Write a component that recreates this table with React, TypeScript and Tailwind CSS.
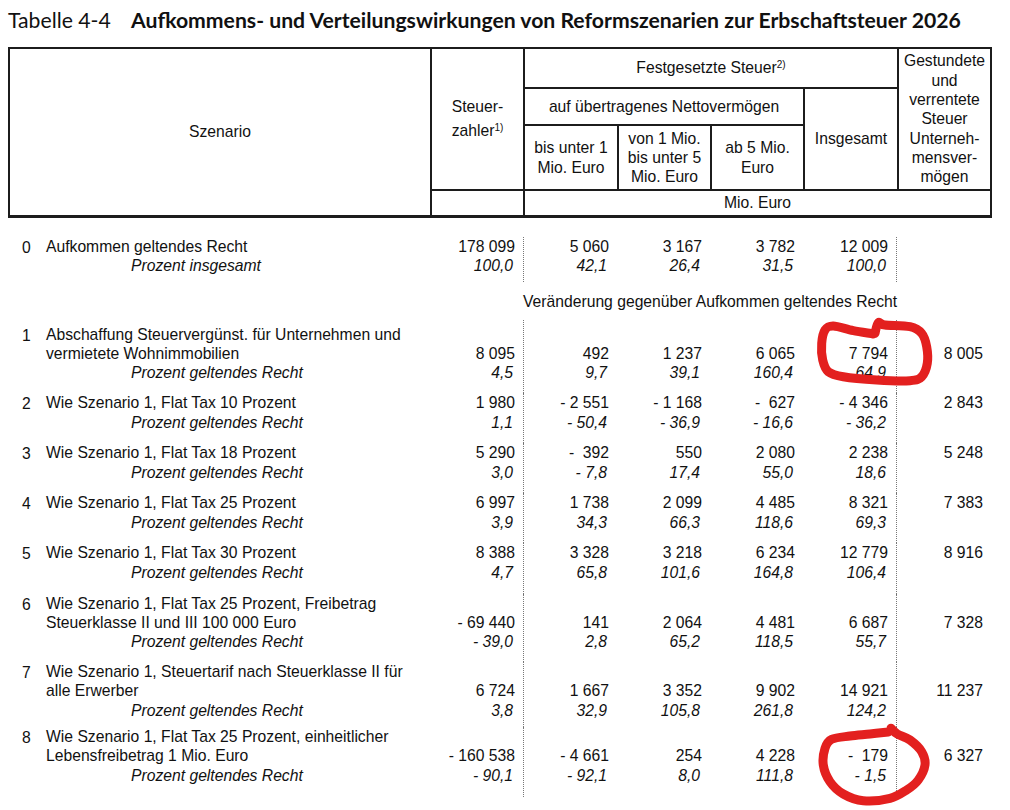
import React from 'react';

type Row = {
  idx: string;
  lines: string[];
  pctLabel: string;
  values: string[];
  pcts: string[];
  pad: string;
};

const rows: Row[] = [
  {
    idx: '1',
    lines: ['Abschaffung Steuervergünst. für Unternehmen und', 'vermietete Wohnimmobilien'],
    pctLabel: 'Prozent geltendes Recht',
    values: ['8 095', '492', '1 237', '6 065', '7 794', '8 005'],
    pcts: ['4,5', '9,7', '39,1', '160,4', '64,9'],
    pad: 'pt-[4.7px] pb-[11.1px]',
  },
  {
    idx: '2',
    lines: ['Wie Szenario 1, Flat Tax 10 Prozent'],
    pctLabel: 'Prozent geltendes Recht',
    values: ['1 980', '- 2 551', '- 1 168', '-  627', '- 4 346', '2 843'],
    pcts: ['1,1', '- 50,4', '- 36,9', '- 16,6', '- 36,2'],
    pad: 'pb-[11.6px]',
  },
  {
    idx: '3',
    lines: ['Wie Szenario 1, Flat Tax 18 Prozent'],
    pctLabel: 'Prozent geltendes Recht',
    values: ['5 290', '-  392', '550', '2 080', '2 238', '5 248'],
    pcts: ['3,0', '- 7,8', '17,4', '55,0', '18,6'],
    pad: 'pb-[11.6px]',
  },
  {
    idx: '4',
    lines: ['Wie Szenario 1, Flat Tax 25 Prozent'],
    pctLabel: 'Prozent geltendes Recht',
    values: ['6 997', '1 738', '2 099', '4 485', '8 321', '7 383'],
    pcts: ['3,9', '34,3', '66,3', '118,6', '69,3'],
    pad: 'pb-[11.6px]',
  },
  {
    idx: '5',
    lines: ['Wie Szenario 1, Flat Tax 30 Prozent'],
    pctLabel: 'Prozent geltendes Recht',
    values: ['8 388', '3 328', '3 218', '6 234', '12 779', '8 916'],
    pcts: ['4,7', '65,8', '101,6', '164,8', '106,4'],
    pad: 'pb-[11.9px]',
  },
  {
    idx: '6',
    lines: ['Wie Szenario 1, Flat Tax 25 Prozent, Freibetrag', 'Steuerklasse II und III 100 000 Euro'],
    pctLabel: 'Prozent geltendes Recht',
    values: ['- 69 440', '141', '2 064', '4 481', '6 687', '7 328'],
    pcts: ['- 39,0', '2,8', '65,2', '118,5', '55,7'],
    pad: 'pb-[10.8px]',
  },
  {
    idx: '7',
    lines: ['Wie Szenario 1, Steuertarif nach Steuerklasse II für', 'alle Erwerber'],
    pctLabel: 'Prozent geltendes Recht',
    values: ['6 724', '1 667', '3 352', '9 902', '14 921', '11 237'],
    pcts: ['3,8', '32,9', '105,8', '261,8', '124,2'],
    pad: 'pb-[7.4px]',
  },
  {
    idx: '8',
    lines: ['Wie Szenario 1, Flat Tax 25 Prozent, einheitlicher', 'Lebensfreibetrag 1 Mio. Euro'],
    pctLabel: 'Prozent geltendes Recht',
    values: ['- 160 538', '- 4 661', '254', '4 228', '-  179', '6 327'],
    pcts: ['- 90,1', '- 92,1', '8,0', '111,8', '- 1,5'],
    pad: 'pb-[12px]',
  },
];

const baseRow: Row = {
  idx: '0',
  lines: ['Aufkommen geltendes Recht'],
  pctLabel: 'Prozent insgesamt',
  values: ['178 099', '5 060', '3 167', '3 782', '12 009', ''],
  pcts: ['100,0', '42,1', '26,4', '31,5', '100,0'],
  pad: 'pt-0 pb-[6.7px]',
};

const GRID = 'grid grid-cols-[422px_93px_94px_93px_93px_94px_93px]';
const cell = 'border-2 border-[#1c1c1c] p-0 align-middle';

// catmull-rom through the points, gives a hand drawn look
const smooth = (pts: number[][]) => {
  let d = `M${pts[0][0]},${pts[0][1]}`;
  for (let i = 0; i < pts.length - 1; i++) {
    const p0 = pts[i - 1] || pts[i];
    const p1 = pts[i];
    const p2 = pts[i + 1];
    const p3 = pts[i + 2] || p2;
    const c1x = p1[0] + (p2[0] - p0[0]) / 6;
    const c1y = p1[1] + (p2[1] - p0[1]) / 6;
    const c2x = p2[0] - (p3[0] - p1[0]) / 6;
    const c2y = p2[1] - (p3[1] - p1[1]) / 6;
    d += ` C${c1x.toFixed(1)},${c1y.toFixed(1)} ${c2x.toFixed(1)},${c2y.toFixed(1)} ${p2[0]},${p2[1]}`;
  }
  return d;
};

const circleTop = [
  [875, 333.3], [878.3, 322.7], [885, 325], [910, 326.7], [921.7, 333.3], [926.7, 346.7],
  [927.3, 363.3], [921.7, 376.7], [910, 380.7], [876.7, 380], [843.3, 376.7], [828.3, 371.7],
  [822.7, 360], [821.7, 343.3], [825, 330], [833.3, 326], [853.3, 330.7], [873.3, 334],
];

const circleBottom = [
  [891, 728.3], [897.3, 734], [910, 740], [921.7, 751.7], [925, 765], [918.3, 780],
  [906.7, 790], [890, 798.3], [863.3, 800.7], [843.3, 794], [830, 781.7], [823.3, 765],
  [825, 748.3], [831.7, 739.3], [850, 736], [870, 734], [888.3, 732],
];

const DataRow: React.FC<{ row: Row }> = ({ row }) => {
  const blanks = row.lines.length - 1;
  return (
    <div className={GRID}>
      <div className={`flex ${row.pad}`}>
        <div className="w-[38px] pl-[14px] pt-[1px]">{row.idx}</div>
        <div className="flex-1 whitespace-nowrap">
          {row.lines.map((l) => (
            <div key={l}>{l}</div>
          ))}
          <div className="pl-[85px] italic">{row.pctLabel}</div>
        </div>
      </div>
      {row.pcts.map((p, i) => (
        <div
          key={i}
          className={`text-right pr-[8px] ${row.pad} ${
            i === 1 ? 'border-l border-dotted border-[#777]' : ''
          } ${i === 4 ? 'border-r border-dotted border-[#777]' : ''}`}
        >
          {Array.from({ length: blanks }).map((_, b) => (
            <div key={b}>&nbsp;</div>
          ))}
          <div className="whitespace-pre">{row.values[i]}</div>
          <div className="whitespace-pre italic pr-[2px]">{p}</div>
        </div>
      ))}
      <div className={`text-right pr-[7px] ${row.pad}`}>
        {Array.from({ length: blanks }).map((_, b) => (
          <div key={b}>&nbsp;</div>
        ))}
        <div className="whitespace-pre">{row.values[5]}</div>
      </div>
    </div>
  );
};

export default function App() {
  return (
    <div className="relative w-[1010px] h-[810px] overflow-hidden bg-white text-[#111]">
      <div className="h-[47px] pl-[8px] pt-[7px] flex whitespace-nowrap font-['Lato',sans-serif] text-[21.2px] leading-[26px]">
        <span className="w-[123px]">Tabelle 4-4</span>
        <span className="font-bold">
          Aufkommens- und Verteilungswirkungen von Reformszenarien zur Erbschaftsteuer 2026
        </span>
      </div>

      <div className="font-['Liberation_Sans',Arial,sans-serif] text-[15.7px] leading-[19.2px]">
        <table className="ml-[8px] w-[982px] table-fixed border-collapse border-2 border-b-[3px] border-[#1c1c1c] text-center">
          <colgroup>
            <col className="w-[422px]" />
            <col className="w-[93px]" />
            <col className="w-[94px]" />
            <col className="w-[93px]" />
            <col className="w-[93px]" />
            <col className="w-[94px]" />
            <col className="w-[93px]" />
          </colgroup>
          <tbody>
            <tr className="h-[40px]">
              <td rowSpan={4} className={cell}>
                Szenario
              </td>
              <td rowSpan={3} className={cell}>
                <div className="leading-[24px]">
                  Steuer-
                  <br />
                  zahler<sup className="text-[10px]">1)</sup>
                </div>
              </td>
              <td colSpan={4} className={cell}>
                Festgesetzte Steuer<sup className="text-[10px]">2)</sup>
              </td>
              <td rowSpan={3} className={cell}>
                <div className="leading-[19.3px]">
                  Gestundete
                  <br />
                  und
                  <br />
                  verrentete
                  <br />
                  Steuer
                  <br />
                  Unterneh-
                  <br />
                  mensver-
                  <br />
                  mögen
                </div>
              </td>
            </tr>
            <tr className="h-[37px]">
              <td colSpan={3} className={cell}>
                auf übertragenes Nettovermögen
              </td>
              <td rowSpan={2} className={cell}>
                Insgesamt
              </td>
            </tr>
            <tr className="h-[65px]">
              <td className={cell}>
                <div className="leading-[20px]">
                  bis unter 1
                  <br />
                  Mio. Euro
                </div>
              </td>
              <td className={cell}>
                <div className="leading-[19.3px]">
                  von 1 Mio.
                  <br />
                  bis unter 5
                  <br />
                  Mio. Euro
                </div>
              </td>
              <td className={cell}>
                <div className="leading-[20px]">
                  ab 5 Mio.
                  <br />
                  Euro
                </div>
              </td>
            </tr>
            <tr className="h-[26px]">
              <td className={cell}></td>
              <td colSpan={5} className={cell}>
                Mio. Euro
              </td>
            </tr>
          </tbody>
        </table>

        <div className="ml-[8px] w-[982px] pt-[19.5px]">
          <DataRow row={baseRow} />
          <div className={GRID}>
            <div className="col-start-3 col-span-4 mt-[10.4px] mb-[8.4px] whitespace-nowrap text-center">
              Veränderung gegenüber Aufkommen geltendes Recht
            </div>
          </div>
          {rows.map((r) => (
            <DataRow key={r.idx} row={r} />
          ))}
        </div>
      </div>

      <svg
        className="pointer-events-none absolute left-0 top-0"
        width="1010"
        height="810"
        viewBox="0 0 1010 810"
        fill="none"
      >
        <path
          d={smooth(circleTop)}
          stroke="#e3201f"
          strokeWidth="9"
          strokeLinecap="round"
          strokeLinejoin="round"
        />
        <path
          d={smooth(circleBottom)}
          stroke="#e3201f"
          strokeWidth="9"
          strokeLinecap="round"
          strokeLinejoin="round"
        />
      </svg>
    </div>
  );
}
